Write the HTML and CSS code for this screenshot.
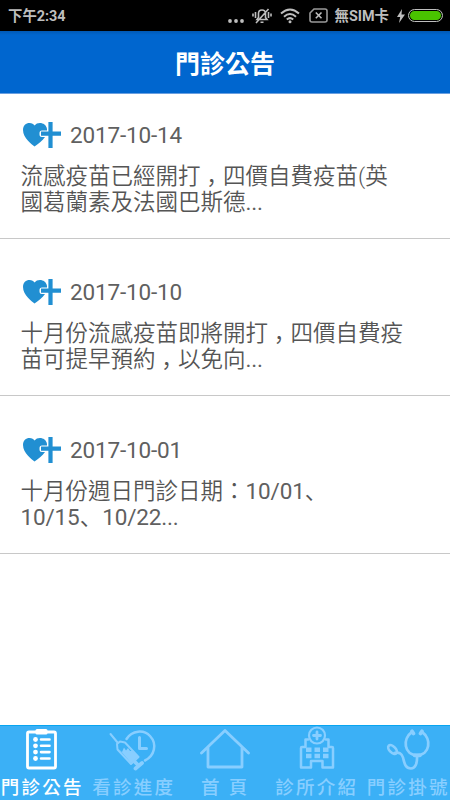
FILE: index.html
```html
<!DOCTYPE html>
<html lang="zh-Hant">
<head>
    <meta charset="UTF-8">
    <meta name="viewport" content="width=device-width, initial-scale=1.0">
    <title>門診公告</title>
    <link rel="stylesheet" href="styles.css">
</head>
<body>
    <svg class="symbols" width="0" height="0">
        <symbol id="heart-plus" viewBox="0 0 40 28">
            <path class="heart" d="M12.500 25.500C10 23.500 1 17 1 9C1 4.500 4 2 7.500 2C10 2 11.500 3.200 12.500 4.500C14 2.800 15.500 2 18 2C21 2 24.500 4 25 8V9.500H20Q17.500 9.500 17.500 12V13.500Q17.500 16 20 16H23C20.500 20 16 23 12.500 25.500Z"/>
            <path class="plus" d="M28.500 1V27M19 12.700H39"/>
        </symbol>
    </svg>
    <div class="status-bar">
        <span class="clock">下午2:34</span>
        <div class="status-icons">
            <svg class="dots" width="16" height="20" viewBox="0 0 16 20"><circle cx="2" cy="15" r="1.900"/><circle cx="8" cy="15" r="1.900"/><circle cx="14" cy="15" r="1.900"/></svg>
            <svg class="mute" width="20" height="18" viewBox="0 0 20 18">
                <path d="M5 12.500H15L13.500 10.500V6.500C13.500 4 12 3 10 3S6.500 4 6.500 6.500V10.500ZM8.500 15.300H11.500M4 16L16.500 2M3.500 5V11M1 6.500V9.500M16.500 5V11M19 6.500V9.500"/>
            </svg>
            <svg class="wifi" width="20" height="16" viewBox="0 0 20 16">
                <path d="M1 5.500Q10 -2.500 19 5.500M4 8.700Q10 3.300 16 8.700M6.800 11.500Q10 8.700 13.200 11.500"/><circle cx="10" cy="13.700" r="1.500"/>
            </svg>
            <svg class="no-sim" width="19" height="15" viewBox="0 0 19 15">
                <path d="M5 1H16Q18 1 18 3V12Q18 14 16 14H3Q1 14 1 12V5Z"/><path class="cross" d="M6.800 4.500L12.500 10.200M12.500 4.500L6.800 10.200"/>
            </svg>
            <span class="carrier">無SIM卡</span>
            <svg class="bolt" width="8" height="14" viewBox="0 0 8 14"><path d="M5 0L0 8H3.200L2 14L8 5.500H4.500Z"/></svg>
            <div class="battery"></div>
        </div>
    </div>
    <div class="header">
        <h1>門診公告</h1>
    </div>
    <div class="news-list">
        <div class="news">
            <div class="news-date">
                <svg class="news-icon"><use href="#heart-plus"/></svg>
                <span class="num">2017-10-14</span>
            </div>
            <p>流感疫苗已經開打<span class="comma" lang="zh-Hans">，</span>四價自費疫苗(英<br>國葛蘭素及法國巴斯德<span class="num">...</span></p>
        </div>
        <div class="news">
            <div class="news-date">
                <svg class="news-icon"><use href="#heart-plus"/></svg>
                <span class="num">2017-10-10</span>
            </div>
            <p>十月份流感疫苗即將開打<span class="comma" lang="zh-Hans">，</span>四價自費疫<br>苗可提早預約<span class="comma" lang="zh-Hans">，</span>以免向<span class="num">...</span></p>
        </div>
        <div class="news">
            <div class="news-date">
                <svg class="news-icon"><use href="#heart-plus"/></svg>
                <span class="num">2017-10-01</span>
            </div>
            <p>十月份週日門診日期：<span class="num">10/01</span><span class="pause" lang="zh-Hans">、</span><br><span class="num">10/15</span><span class="pause" lang="zh-Hans">、</span><span class="num">10/22...</span></p>
        </div>
    </div>
    <div class="tab-bar">
        <a class="tab active" href="#">
            <svg viewBox="0 0 50 44">
                <rect x="10.500" y="5" width="28" height="36" rx="1.500" stroke-width="2.800"/>
                <rect class="fill" x="18.500" y="2" width="12" height="5.500" rx="1.500"/>
                <path d="M24 12.500H32.500M24 18.800H32.500M24 25.100H32.500M24 31.500H32.500" stroke-width="2.600"/>
                <g class="fill"><circle cx="18.500" cy="12.500" r="2.400"/><circle cx="18.500" cy="18.800" r="2.400"/><circle cx="18.500" cy="25.100" r="2.400"/><circle cx="18.500" cy="31.500" r="2.400"/></g>
            </svg>
            <span>門診公告</span>
        </a>
        <a class="tab" href="#">
            <svg viewBox="0 0 50 44">
                <path d="M18.500 12C24 3 36 2.500 42 9C49.500 17 46.500 29 37 33.500" stroke-width="2.500"/>
                <path d="M31.500 10.500V21.500H38.500" stroke-width="3"/>
                <path d="M2.500 7L9.500 15.500" stroke-width="2"/>
                <path d="M9 17L12 14.500L17 15.500L30.500 30L23 37L9.500 22.500Z" stroke-width="2"/>
                <path class="fill" d="M11 22L14 25L16 20.500L18 23.500L20 21L22 24L24 24L30 30L23 36Z"/>
                <path d="M26.500 34.500L30 38M27.500 41.500L34 36" stroke-width="3.800"/>
            </svg>
            <span>看診進度</span>
        </a>
        <a class="tab home" href="#">
            <svg viewBox="0 0 50 44">
                <path d="M1.500 26L25 3.500L48.500 26M8 20.500V40H42V20.500" stroke-width="2.800"/>
            </svg>
            <span>首 頁</span>
        </a>
        <a class="tab" href="#">
            <svg viewBox="0 0 50 44">
                <path d="M17 12.500H14.500V20H11Q10 20 10 21V40.500H20V34H31.500V40.500H42V21Q42 20 41 20H37.500V12.500H35" stroke-width="2.500"/>
                <circle cx="26" cy="8.500" r="8" stroke-width="2.200"/>
                <path d="M26 5V12M22.500 8.500H29.500" stroke-width="2.800"/>
                <path d="M15 22.800H20.500M23.500 22.800H29M32 22.800H37.500M15 29H20.500M23.500 29H29M32 29H37.500" stroke-width="4.500" stroke-linecap="butt"/>
            </svg>
            <span>診所介紹</span>
        </a>
        <a class="tab" href="#">
            <svg viewBox="0 0 50 44">
                <path d="M29 5C19 12 21 28 34 28S49 12 39 5" stroke-width="2.800"/>
                <path d="M29 4.300L30.500 6.500M39 4.300L37.500 6.500" stroke-width="3.800"/>
                <path d="M34 28.500C34.500 37 32 41.500 28 41.500C22 41.500 21.500 36 20 30.500C19 27 16 24.500 11.500 26" stroke-width="2.700"/>
                <ellipse cx="9.500" cy="22.500" rx="3" ry="5.300" transform="rotate(-45 9.500 22.500)" stroke-width="2.700"/>
                <path d="M31.500 28.500H37" stroke-width="3.500"/>
            </svg>
            <span>門診掛號</span>
        </a>
    </div>
</body>
</html>
```
FILE: styles.css
```css
* {
    box-sizing: border-box;
}
body {
    margin: 0;
    height: 800px;
    display: flex;
    flex-direction: column;
    overflow: hidden;
    font-family: Roboto, "Noto Sans CJK TC", sans-serif;
    background-color: #fff;
    color: #555;
}
.symbols {
    display: none;
}
.status-bar {
    height: 31px;
    flex-shrink: 0;
    display: flex;
    justify-content: space-between;
    align-items: center;
    padding: 0 7px 0 8px;
    background-color: #000;
    color: #bebebe;
    font-size: 14px;
    font-weight: 700;
    line-height: 31px;
}
.clock, .carrier {
    padding-top: 1px;
    font-size: 14.4px;
}
.status-icons {
    display: flex;
    align-items: center;
}
.status-icons svg {
    fill: none;
    stroke: #bebebe;
    stroke-width: 1.6;
}
.status-icons circle, .status-icons .bolt {
    fill: #bebebe;
    stroke: none;
}
.status-icons .dots {
    margin-right: 8px;
}
.status-icons .mute {
    margin-right: 8px;
}
.status-icons .wifi {
    margin-right: 9px;
    stroke-width: 2;
}
.status-icons .no-sim {
    margin-right: 7px;
    stroke: #999;
}
.status-icons .cross {
    stroke: #bebebe;
}
.status-icons .bolt {
    margin-left: 8px;
    margin-right: 3px;
}
.battery {
    width: 35px;
    height: 13px;
    border: 1.5px solid #bebebe;
    border-radius: 7px;
    background-color: #49c400;
    background-clip: padding-box;
    box-shadow: inset 0 0 0 1px #000;
}
.header {
    height: 63px;
    flex-shrink: 0;
    display: flex;
    justify-content: center;
    align-items: center;
    background: linear-gradient(#0059b5, #0066cf 4px);
    border-bottom: 1px solid #6a9fe0;
}
.header h1 {
    margin: 0;
    padding-top: 5px;
    font-size: 25px;
    font-weight: 700;
    line-height: 36px;
    color: #fff;
}
.news-list {
    flex: 1;
}
.news {
    height: 157.5px;
    padding: 38.5px 20.5px 0;
    border-bottom: 1px solid #c8c8c8;
    font-size: 22.5px;
    font-weight: 350;
}
.news:first-child {
    height: 144.5px;
    padding-top: 26px;
}
.news-date {
    height: 30px;
    display: flex;
    align-items: center;
}
.news-icon {
    width: 40px;
    height: 28px;
    margin: 0 8px 0 1.5px;
}
.heart {
    fill: #218fd2;
}
.plus {
    fill: none;
    stroke: #218fd2;
    stroke-width: 4.2;
}
.num {
    color: #606060;
    font-weight: 400;
    letter-spacing: -0.15px;
}
.news p {
    margin: 13px 0 0;
    line-height: 26.3px;
    white-space: nowrap;
}
.comma, .pause {
    font-family: "Noto Sans CJK SC", sans-serif;
    line-height: 1;
}
/* half-width comma, centred in a full cell */
.comma {
    padding: 0 0.25em;
    font-feature-settings: "halt";
}
.tab-bar {
    height: 75px;
    flex-shrink: 0;
    display: grid;
    grid-template-columns: repeat(5, 91.5px);
    margin-left: -4px;
    background-color: #3bb0f6;
    border-top: 1px solid #08a5f0;
}
.tab {
    display: flex;
    flex-direction: column;
    align-items: center;
    padding-top: 1px;
    color: #88ceff;
    text-decoration: none;
}
.tab.active {
    color: #fff;
}
.tab svg {
    width: 50px;
    height: 44px;
    overflow: visible;
    fill: none;
    stroke: currentColor;
    stroke-linecap: round;
    stroke-linejoin: round;
}
.tab .fill {
    fill: currentColor;
    stroke: none;
}
.tab span {
    margin-top: 4px;
    margin-right: -1px;
    font-size: 18.5px;
    font-weight: 500;
    line-height: 26px;
    letter-spacing: 2.3px;
    white-space: pre;
}
```
